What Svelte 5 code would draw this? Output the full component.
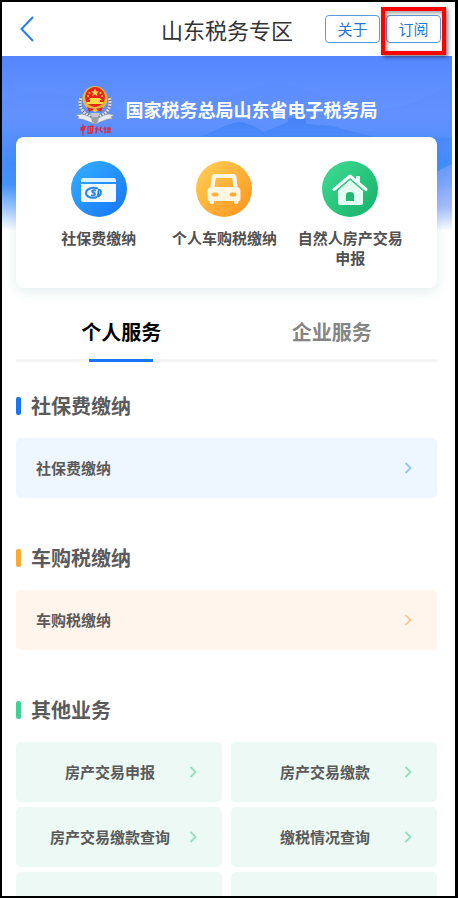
<script>
	const quickLinks = [
		{ icon: 'card', label: '社保费缴纳' },
		{ icon: 'car', label: '个人车购税缴纳' },
		{ icon: 'house', label: '自然人房产交易申报' }
	];

	const tabs = ['个人服务', '企业服务'];
	let active = $state(0);

	const sections = [
		{ tone: 'blue', title: '社保费缴纳', items: ['社保费缴纳'] },
		{ tone: 'orange', title: '车购税缴纳', items: ['车购税缴纳'] },
		{
			tone: 'green',
			title: '其他业务',
			grid: true,
			items: ['房产交易申报', '房产交易缴款', '房产交易缴款查询', '缴税情况查询', '', '']
		}
	];
</script>

<div class="frame">
	<header class="topbar">
		<button class="back" aria-label="返回">
			<svg width="14" height="26" viewBox="0 0 14 26" fill="none" stroke="currentColor" stroke-width="2">
				<path d="M13 1 L1.500 13 L13 25" />
			</svg>
		</button>
		<h1>山东税务专区</h1>
		<div class="topbar-actions">
			<button class="outline-btn">关于</button>
			<span class="marked"><button class="outline-btn">订阅</button></span>
		</div>
	</header>

	<main>
		<div class="hero">
			<svg class="scenery" viewBox="0 0 450 184" preserveAspectRatio="none" aria-hidden="true">
				<defs>
					<linearGradient id="sky" x1="0" y1="0" x2="0" y2="1">
						<stop offset="0" stop-color="#5586ff" />
						<stop offset="0.3" stop-color="#6494ff" />
						<stop offset="0.58" stop-color="#3d8cfd" />
						<stop offset="0.7" stop-color="#4593fd" />
						<stop offset="0.83" stop-color="#a3c9fe" />
						<stop offset="0.95" stop-color="#ffffff" />
					</linearGradient>
					<linearGradient id="hill" x1="0" y1="0" x2="0" y2="1">
						<stop offset="0" stop-color="#5a8cfb" stop-opacity="0.6" />
						<stop offset="1" stop-color="#6f90fc" stop-opacity="0" />
					</linearGradient>
					<linearGradient id="ridge" x1="0" y1="0" x2="0" y2="1">
						<stop offset="0" stop-color="#3b7cf2" stop-opacity="0.7" />
						<stop offset="1" stop-color="#4a90ff" stop-opacity="0" />
					</linearGradient>
					<linearGradient id="haze" x1="0" y1="0" x2="0" y2="1">
						<stop offset="0" stop-color="#8aa6fb" stop-opacity="0.5" />
						<stop offset="0.6" stop-color="#a5b8fc" stop-opacity="0.9" />
						<stop offset="1" stop-color="#ffffff" stop-opacity="0" />
					</linearGradient>
				</defs>
				<rect width="450" height="184" fill="url(#sky)" />
				<path fill="url(#hill)" d="M0 44 C30 32 70 36 105 50 C145 64 190 52 220 42 C245 34 258 28 278 27 C310 30 345 58 390 52 C415 48 435 34 450 30 V130 H0 Z" />
				<path fill="url(#ridge)" d="M200 80 C215 74 228 66 240 66 L252 70 L262 76 L286 66 V62 H304 V68 L330 70 L352 76 L378 82 L450 82 V120 H200 Z" />
				<path fill="url(#haze)" d="M434 116 L450 108 V178 H434 Z" />
			</svg>

			<div class="brand">
				<svg class="emblem" width="38" height="52" viewBox="0 0 38 52" aria-hidden="true">
					<g fill="none">
						<path stroke="#d9dce4" stroke-width="3" d="M5 13 C2 22 6 29 15 33 M33 13 C36 22 32 29 23 33" />
						<path stroke="#6d727d" stroke-width="3" stroke-dasharray="1 2" d="M5 13 C2 22 6 29 15 33 M33 13 C36 22 32 29 23 33" />
					</g>
					<path fill="#e9ebf0" stroke="#8b919d" stroke-width="0.600" d="M0 31 L5 30 C9 30 12 33 19 35 C26 33 29 30 33 30 L38 31 L35 33 L37 35 C31 34 26 38 19 40 C12 38 7 34 1 35 L3 33 Z" />
					<path fill="#9a9faa" d="M15 33 H23 L22 38 L19 40 L16 38 Z" />
					<circle cx="19" cy="14.500" r="12.500" fill="#e9b43d" />
					<circle cx="19" cy="13" r="10" fill="#ec2318" />
					<path fill="#ffda46" d="M19 4.500 L20.100 7.200 L23 7.400 L20.800 9.100 L21.500 12 L19 10.400 L16.500 12 L17.200 9.100 L15 7.400 L17.900 7.200 Z" />
					<g fill="#ffda46">
						<circle cx="13.500" cy="9" r="1" />
						<circle cx="24.500" cy="9" r="1" />
						<circle cx="12" cy="12" r="1" />
						<circle cx="26" cy="12" r="1" />
						<path d="M14 14 H24 L25.500 16 H24 V18 H27 V20 H11 V18 H14 V16 H12.500 Z" />
					</g>
					<path fill="#df2a1b" d="M11 23 C16 25 22 25 27 23 L25 28 L21 26 H17 L13 28 Z" />
					<circle cx="19" cy="26" r="2" fill="#f2c341" />
					<path fill="#c4c8d0" d="M14 29 H24 L22 33 H16 Z" />
					<g fill="none" stroke="#e0283a" stroke-width="1.300" stroke-linecap="round">
						<path d="M5 44 L9 43 L8 46 H5 Z M7 41 V51" />
						<path d="M12 43 L17 42 L16 49 H12 Z M14.500 44 V47" />
						<path d="M21 43 L20 49 M19.500 45 H22 M25 43 L24 46 L26 48" />
						<path d="M29 43 V49 M28 45 H30 M32 44 H34 V46 H32 Z M31 48 H34" />
					</g>
				</svg>
				<span>国家税务总局山东省电子税务局</span>
			</div>

			<nav class="quick-card">
				{#each quickLinks as link}
					<a href="#{link.icon}" class="quick">
						<svg width="56" height="56" viewBox="0 0 56 56" aria-hidden="true">
							{#if link.icon === 'card'}
								<defs>
									<linearGradient id="g-card" x1="0" y1="0" x2="1" y2="1">
										<stop offset="0" stop-color="#33b1ff" />
										<stop offset="1" stop-color="#1874f9" />
									</linearGradient>
								</defs>
								<circle cx="28" cy="28" r="28" fill="url(#g-card)" />
								<path fill="#dcf1ff" d="M12 17 H43 Q45 17 45 19 V21 H10 V19 Q10 17 12 17 Z" />
								<path fill="#f4fbff" d="M10 23 H45 V39 Q45 41 43 41 H12 Q10 41 10 39 Z" />
								<g fill="none" stroke="#2c86e8">
									<path stroke-width="2" d="M27 27.500 C21 25.500 15 28 15 32 C15 36 21 38 26 36" />
									<path stroke-width="2" d="M25 29.500 C22 28.500 20 30 22 31.500 C25 32.500 25 34.500 20 34.500" />
									<path stroke-width="2" d="M28 28 L26.500 36 M29 28.500 C31 31 30 34 27 35.500" />
								</g>
							{:else if link.icon === 'car'}
								<defs>
									<linearGradient id="g-car" x1="0" y1="0" x2="1" y2="1">
										<stop offset="0" stop-color="#ffd157" />
										<stop offset="1" stop-color="#ff921c" />
									</linearGradient>
								</defs>
								<circle cx="28" cy="28" r="28" fill="url(#g-car)" />
								<path
									fill="#fff7e3"
									fill-rule="evenodd"
									d="M19 13 H37 Q40 13 40.500 16 L41.500 26 Q44.500 27 44.500 30 V38 Q44.500 40 43 40 H42.500 V41 Q42.500 43 40.500 43 Q38 43 38 41 V40 H18 V41 Q18 43 16 43 Q13.500 43 13.500 41 V40 H13 Q11.500 40 11.500 38 V30 Q11.500 27 14.500 26 L15.500 16 Q16 13 19 13 Z M20.500 17 Q19.700 17 19.600 18 L18.500 26 H37.500 L36.400 18 Q36.300 17 35.500 17 Z M18 31.500 Q15.500 31.500 15.500 33.500 Q15.500 35.500 18 35.500 H20 Q22.500 35.500 22.500 33.500 Q22.500 31.500 20 31.500 Z M36 31.500 Q33.500 31.500 33.500 33.500 Q33.500 35.500 36 35.500 H38 Q40.500 35.500 40.500 33.500 Q40.500 31.500 38 31.500 Z"
								/>
							{:else}
								<defs>
									<linearGradient id="g-house" x1="0" y1="0" x2="1" y2="1">
										<stop offset="0" stop-color="#3fdc93" />
										<stop offset="1" stop-color="#16b069" />
									</linearGradient>
								</defs>
								<circle cx="28" cy="28" r="28" fill="url(#g-house)" />
								<path fill="#e2fff1" d="M28 18.500 L41 29 V42 Q41 44 39 44 H18 Q16 44 16 42 V29 Z" />
								<path fill="#e2fff1" d="M34 15 H38 V22 L34 19 Z" />
								<path fill="none" stroke="#35c983" stroke-width="1" d="M14.500 30 L28 18.500 L41.500 30" />
								<path fill="none" stroke="#f7fffb" stroke-width="3" stroke-linecap="round" stroke-linejoin="round" d="M12 28.500 L28 15 L44 28.500" />
								<path fill="#20b873" d="M24 40 V34 Q24 31 28 31 Q32 31 32 34 V40 Z" />
							{/if}
						</svg>
						<span>{link.label}</span>
					</a>
				{/each}
			</nav>
		</div>

		<div class="tabs" role="tablist">
			{#each tabs as tab, i}
				<button role="tab" class="tab" class:active={active === i} aria-selected={active === i} onclick={() => (active = i)}>
					{tab}
				</button>
			{/each}
		</div>

		{#each sections as section}
			<section class={section.tone}>
				<h2>{section.title}</h2>
				<div class="items" class:grid={section.grid}>
					{#each section.items as item}
						<button class="item">
							<span>{item}</span>
							<svg width="8" height="12" viewBox="0 0 8 12" fill="none" stroke="currentColor" stroke-width="1.800" aria-hidden="true">
								<path d="M1.500 1 L6.500 6 L1.500 11" />
							</svg>
						</button>
					{/each}
				</div>
			</section>
		{/each}
	</main>
</div>

<style>
	:global(body) {
		margin: 0;
	}

	.frame {
		box-sizing: border-box;
		height: 100vh;
		display: flex; flex-direction: column; overflow: hidden;
		border: 2px solid #000;
		border-right-width: 3px;
		padding-right: 3px;
		background: #fff;
		color: #5a5a5a;
		font-family: "Noto Sans CJK SC", sans-serif;
	}

	button {
		font-family: inherit; cursor: pointer;
	}

	.topbar {
		height: 54px; padding: 0 11px;
		display: grid; grid-template-columns: 1fr auto 1fr; align-items: center;
		flex-shrink: 0;
	}
	.back {
		width: 28px; height: 26px; padding: 0 7px;
		border: none; background: none; color: #2a7df0;
	}
	.back svg { display: block; }
	h1 {
		margin: 0;
		font-size: 22px; line-height: 30px; font-weight: 400; color: #333;
	}
	.topbar-actions { display: flex; justify-content: flex-end; gap: 6px; }
	.outline-btn {
		box-sizing: border-box;
		width: 55px; height: 28px; padding: 0;
		border: 1px solid #5f9bd8; border-radius: 4px;
		background: #fff; color: #2677d4;
		font-size: 15px; line-height: 20px;
	}
	.marked { position: relative; display: flex; }
	.marked::after {
		content: ''; position: absolute; inset: -8px -5px -12px;
		border: 4px solid #fe0000;
		box-shadow: 2px 2px 4px rgba(0, 0, 0, 0.5), inset 2px 2px 4px rgba(0, 0, 0, 0.4);
		pointer-events: none; z-index: 2;
	}

	main {
		flex: 1; min-height: 0; overflow-y: auto;
		scrollbar-width: none;
	}

	.hero { position: relative; padding: 28px 15px 0 14px; }
	.scenery { position: absolute; top: 0; left: 0; width: 100%; height: 184px; }

	.brand {
		position: relative;
		height: 53px;
		display: flex; align-items: flex-start; justify-content: center; gap: 12px;
		color: #fff; font-size: 18px; line-height: 50px; font-weight: 700;
	}

	.quick-card {
		position: relative;
		display: grid; grid-template-columns: repeat(3, 1fr);
		padding: 24px 24px 20px 20px;
		border-radius: 8px;
		background: #fff;
		box-shadow: 0 4px 12px rgba(40, 110, 120, 0.12);
	}
	.quick {
		padding: 0 8px;
		display: flex; flex-direction: column; align-items: center; gap: 11px;
		color: #505050; text-decoration: none; text-align: center;
		font-size: 15px; line-height: 20px; font-weight: 700;
	}

	.tabs {
		display: grid; grid-template-columns: 1fr 1fr;
		margin: 30px 15px 0 14px;
		border-bottom: 3px solid #f4f5f7;
	}
	.tab {
		position: relative;
		padding: 0 0 13px;
		border: none; background: none;
		color: #858585; font-size: 20px; line-height: 28px; font-weight: 700;
	}
	.tab.active { color: #000; }
	.tab.active::after {
		content: ''; position: absolute; left: 50%; bottom: -3px;
		width: 64px; height: 3px; margin-left: -32px;
		background: #1a75f5;
	}

	section { margin: 0 15px 46px 14px; }
	.tabs + section { margin-top: 30px; }
	h2 {
		display: flex; align-items: center; gap: 10px;
		margin: 0 0 18px;
		font-size: 20px; line-height: 28px; font-weight: 700;
	}
	h2::before {
		content: '';
		width: 5px; height: 18px; border-radius: 2px;
		background: var(--bar);
	}

	.items { display: grid; }
	.items.grid { grid-template-columns: 1fr 1fr; gap: 5px 9px; }
	.item {
		height: 60px; padding: 0 25px 0 20px;
		display: flex; align-items: center; gap: 5px;
		border: none; border-radius: 5px;
		background: var(--fill); color: var(--arrow);
		font-size: 15px; line-height: 20px; font-weight: 700;
	}
	.item span { flex: 1; color: #5a5a5a; text-align: left; }
	.grid .item span { text-align: center; }

	.blue { --bar: #1a75f5; --fill: #eef6ff; --arrow: #94c2f8; }
	.orange { --bar: #fbaa34; --fill: #fff5ec; --arrow: #fbc98d; }
	.green { --bar: #3ed393; --fill: #ecf9f5; --arrow: #94dfc0; }
</style>
